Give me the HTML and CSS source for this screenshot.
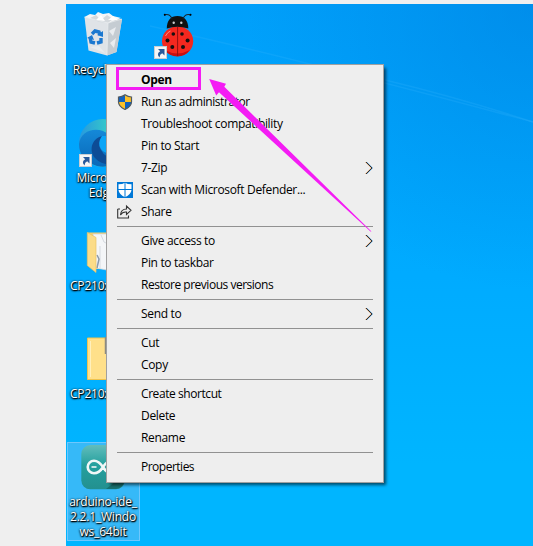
FILE: index.html
```
<!DOCTYPE html>
<html lang="en">
<head>
<meta charset="utf-8">
<title>Desktop</title>
<link rel="stylesheet" href="styles.css">
</head>
<body>
<main class="desktop">
  <svg class="wallpaper" viewBox="66 4 467 542" aria-hidden="true">
    <path d="M150 26Q290 57 533 122" />
    <path d="M385 80Q460 98 533 122" />
  </svg>

  <div class="shortcut recycle">
    <svg class="icon" viewBox="79 11 48 48">
      <path d="M84.5 17L122 19L116.5 52L107 55.5L88.5 50.5Z" fill="#dfe3e7"/>
      <path d="M108 20L122 19L116.5 52L107 55.5Z" fill="#c5ccd2"/>
      <path d="M84.5 17L90 14L95 15L98 12L103 14L109 13L113 16L121 18L108 23Z" fill="#f5f6f7"/>
      <path d="M90 18l6-3 5 5 6-5 6 4-5 4-9-1z" fill="#d4d9dd"/>
      <path d="M96 20l5-5 4 6zM108 20l5-4 5 4z" fill="#fff"/>
      <path d="M84.5 17L108 23L122 19M108 23L107 55" fill="none" stroke="#eef1f4" stroke-width=".6"/>
      <path d="M109 31l7-4-3 9zM110 43l6-5-2 10zM90 47l9-1 6 7z" fill="#e9ecef"/>
      <path d="M92 34l3-3 4 1 1 3M90 37l1 5 4 1M97 43l4-1 0-4" fill="none" stroke="#1b78d0" stroke-width="3.400"/>
      <path d="M97 35l6 2 0-6zM87 38l5-3 2 5z" fill="#1b78d0"/>
    </svg>
    <span class="label">Recycle Bin</span>
  </div>

  <div class="shortcut ladybug">
    <svg class="icon" viewBox="153 11 48 48">
      <ellipse cx="177.6" cy="41.2" rx="15.6" ry="15" fill="#f4281f"/>
      <path d="M165 50Q177 57 190 50Q185 56.500 177.500 56.500Q169 56 165 50Z" fill="#c80f12"/>
      <path d="M166.800 28.500Q167 16 177.500 16Q188 16 188.300 28.500Q177 25 166.800 28.500Z" fill="#111"/>
      <path d="M164 15q6-2 8 4M191 15q-6-2-8 4" fill="none" stroke="#182028" stroke-width="1.100"/>
      <circle cx="164.800" cy="14.800" r="1" /><circle cx="190.500" cy="14.800" r="1"/>
      <path d="M177.600 27V56" stroke="#941010"/>
      <g fill="#161010"><circle cx="173.300" cy="34" r="1.800"/><circle cx="182" cy="34" r="1.800"/><circle cx="167.500" cy="40.500" r="2"/><circle cx="187.600" cy="40.500" r="2"/><circle cx="172.300" cy="47" r="2"/><circle cx="183" cy="47" r="2"/></g>
      <circle cx="173.700" cy="22.800" r="1.200" fill="#ccc"/><circle cx="181.300" cy="22.800" r="1.200" fill="#ccc"/>
      <path d="M165.500 36q2-4 5-5" stroke="#ff8b80" fill="none"/>
      <rect x="154.500" y="46.500" width="12" height="12" fill="#f6f6f6" stroke="#c9ced4"/>
      <path d="M158 49h6.500v6.500l-2.300-2.200q-2.500 1-2.700 4.200q-3.500-4 .7-6.300z" fill="#28599b"/>
    </svg>
  </div>

  <div class="shortcut edge">
    <svg class="icon" viewBox="79 119 48 48">
      <defs>
        <linearGradient id="teal" x1="0" x2="1"><stop stop-color="#2798df"/><stop offset=".6" stop-color="#35c8ca"/><stop offset="1" stop-color="#66dd70"/></linearGradient>
        <linearGradient id="blue" x1="0" y1="0" x2="0" y2="1"><stop stop-color="#1589d8"/><stop offset="1" stop-color="#0868b8"/></linearGradient>
      </defs>
      <circle cx="103" cy="143" r="24" fill="url(#teal)"/>
      <path d="M79 144C80 132 93 127 103 131Q112 135 113 142L115 164Q106 168 97 166Q79 160 79 144Z" fill="url(#blue)"/>
      <path d="M102 136C91 139 89 151 95 158Q102 166 115 164L120 158Q106 160 101 150Q97 143 102 136Z" fill="#0d4c96"/>
      <path d="M102 136Q97 144 101 149Q103 153 112 154V136Z" fill="#0aa5f7"/>
      <rect x="79.500" y="154.500" width="12" height="12" fill="#f6f6f6" stroke="#c9ced4"/>
      <path d="M83 157h6.500v6.500l-2.300-2.200q-2.500 1-2.700 4.200q-3.500-4 .7-6.300z" fill="#28599b"/>
    </svg>
    <span class="label">Microsoft<br>Edge</span>
  </div>

  <div class="shortcut folder-open">
    <svg class="icon" viewBox="79 227 48 48">
      <path d="M87.500 232.500H119V269H96Z" fill="#f0cd72"/>
      <path d="M93 234H112V271L96 268Z" fill="#f4f6f8" stroke="#cdd3d9" stroke-width=".7"/>
      <path d="M101 235l3 7 6 3M100 268V246" fill="none" stroke="#d5dae0"/>
      <path d="M97 255l2 4-2 9" fill="none" stroke="#8a9aad" stroke-width="1.500"/>
      <path d="M87.300 232.500L96 237.500V272.500L87.300 265.500Z" fill="#fbdc88" stroke="#e9c364" stroke-width=".7"/>
    </svg>
    <span class="label">CP210x</span>
  </div>

  <div class="shortcut folder">
    <svg class="icon" viewBox="79 335 48 48">
      <path d="M87.500 338H119V379.500H87.500Z" fill="#ffe08a" stroke="#efc34e"/>
      <path d="M90.500 341V377" stroke="#fff0bd"/>
      <path d="M105.500 337V354" stroke="#8c8b80" stroke-width="1.500"/>
    </svg>
    <span class="label">CP210x</span>
  </div>

  <div class="shortcut arduino selected">
    <svg class="icon" viewBox="79 443 48 48">
      <defs><linearGradient id="ide" x1="0" y1="0" x2="0" y2="1"><stop stop-color="#62bdbc"/><stop offset=".45" stop-color="#25a09e"/><stop offset="1" stop-color="#23908f"/></linearGradient></defs>
      <rect x="81.300" y="445" width="43.500" height="44.300" rx="9" fill="url(#ide)"/>
      <path d="M106 489L124 475V483Q122 488 116 489Z" fill="#18716f"/>
      <path d="M103 467C99 461 96 460.700 94 460.700A6.300 6.300 0 0 0 94 473.300C97 473.300 100 472 103 467C106 462 109 460.700 112 460.700A6.300 6.300 0 0 1 112 473.300C109 473.300 106 472 103 467Z" fill="none" stroke="#f1f7f7" stroke-width="2.600"/>
      <path d="M91.500 467h5" stroke="#f1f7f7" stroke-width="1.600"/>
    </svg>
    <span class="label">arduino-ide_<br>2.2.1_Windo<br>ws_64bit</span>
  </div>

  <nav class="menu">
    <div class="item default">Open</div>
    <div class="item admin">
      <svg class="glyph" viewBox="0 0 16 16"><path d="M8 .8Q11 3 14.500 3V8Q14.500 12.500 8 15.500Q1.500 12.500 1.500 8V3Q5 3 8 .8Z" fill="#fdc128"/><path d="M8 1V8H1.500V3Q5 3 8 1ZM8 8H14.500Q14 12.500 8 15.500Z" fill="#1261bf"/><path d="M8 .8Q11 3 14.500 3V8Q14.500 12.500 8 15.500Q1.500 12.500 1.500 8V3Q5 3 8 .8Z" fill="none" stroke="#505a62" stroke-width="1.200"/></svg>
      <span>Run as administrator</span>
    </div>
    <div class="item trouble">Troubleshoot compatibility</div>
    <div class="item pin">Pin to Start</div>
    <div class="item zip">7-Zip<svg class="chevron" viewBox="0 0 8 14"><path class="warm" d="M.5 1L6.500 7L.5 13"/><path class="cool" d="M1.500 1L7.500 7L1.500 13"/><path d="M1 1L7 7L1 13"/></svg></div>
    <div class="item scan">
      <svg class="glyph" viewBox="0 0 16 16"><path d="M0 0H16V16H0Z" fill="#0078d7"/><path d="M8 .8Q10.500 2.300 14.500 2.300V8Q14 12.500 8 15.300Q2 12.500 1.500 8V2.300Q5.500 2.300 8 .8Z" fill="#fff"/><path d="M8 0V16M1 7.500H15" stroke="#0078d7"/></svg>
      <span>Scan with Microsoft Defender...</span>
    </div>
    <div class="item share">
      <svg class="glyph" viewBox="0 0 16 16"><path d="M.7 5V14H11.500V11.500M.7 5H3M3.500 11Q4 5 9.500 5V2L14 6.300L9.500 10.500V8Q5.500 7.500 3.500 11Z" fill="none" stroke="#333" stroke-width="1.100"/></svg>
      <span>Share</span>
    </div>
    <hr class="separator">
    <div class="item access">Give access to<svg class="chevron" viewBox="0 0 8 14"><path class="warm" d="M.5 1L6.500 7L.5 13"/><path class="cool" d="M1.500 1L7.500 7L1.500 13"/><path d="M1 1L7 7L1 13"/></svg></div>
    <div class="item taskbar">Pin to taskbar</div>
    <div class="item restore">Restore previous versions</div>
    <hr class="separator">
    <div class="item send">Send to<svg class="chevron" viewBox="0 0 8 14"><path class="warm" d="M.5 1L6.500 7L.5 13"/><path class="cool" d="M1.500 1L7.500 7L1.500 13"/><path d="M1 1L7 7L1 13"/></svg></div>
    <hr class="separator">
    <div class="item cut">Cut</div>
    <div class="item copy">Copy</div>
    <hr class="separator">
    <div class="item create">Create shortcut</div>
    <div class="item delete">Delete</div>
    <div class="item rename">Rename</div>
    <hr class="separator">
    <div class="item properties">Properties</div>
  </nav>

  <svg class="annotation" viewBox="66 4 467 542" aria-hidden="true">
    <rect x="117.500" y="68.500" width="82" height="20" fill="none" stroke="#f41cf4" stroke-width="3"/>
    <path d="M209.200 79L226 83.700L224.300 86.700L371.500 231.500L370.500 231.500L219 92.200L216.200 95.500Z" fill="#f41cf4"/>
  </svg>
</main>
</body>
</html>
```
FILE: styles.css
```
body {
  margin: 0;
  background: #efefef;
  font-family: "Open Sans", "Noto Sans", sans-serif;
  font-size: 12px;
  color: #000;
}

.desktop {
  position: relative;
  width: 467px;
  height: 542px;
  margin: 4px 0 0 66px;
  overflow: hidden;
  background:
    radial-gradient(circle at 100% 0, rgba(0, 125, 220, 0.5), transparent 40%),
    linear-gradient(#009ffa, #00abff 50%, #00b5ff 85%);
}

.wallpaper,
.annotation {
  position: absolute;
  inset: 0;
  width: 467px;
  height: 542px;
}

.wallpaper path {
  fill: none;
  stroke: rgba(60, 185, 255, 0.2);
  stroke-width: 1.5;
}

/* Desktop shortcuts sit on a free canvas */
.shortcut {
  position: absolute;
  left: 1px;
  box-sizing: border-box;
  width: 73px;
  height: 99px;
  padding-top: 1px;
}

.icon {
  display: block;
  width: 48px;
  height: 48px;
  margin-left: 12px;
}

.label {
  display: block;
  margin-top: 3px;
  line-height: 15px;
  text-align: center;
  white-space: nowrap;
  color: #fff;
  letter-spacing: -0.2px;
  text-shadow: 1px 1px 1px #000, 0 1px 2px #000, 0 0 2px rgba(0, 0, 0, 0.8);
}

.recycle { top: 6px; }
.ladybug { top: 6px; left: 75px; }
.edge { top: 114px; }
.folder-open { top: 222px; }
.folder { top: 330px; }
.arduino { top: 438px; }

.edge .label { margin-left: -3px; }
.recycle .label { margin-left: -1px; }
.arduino .label { margin-left: -1px; }

.folder .label,
.folder-open .label {
  padding-left: 3px;
  text-align: left;
}

.selected::before {
  content: "";
  position: absolute;
  inset: 0;
  border: 1px solid rgba(135, 205, 255, 0.7);
  background: rgba(120, 190, 240, 0.45);
}

.selected .icon,
.selected .label {
  position: relative;
}

.menu {
  position: absolute;
  left: 40px;
  top: 60px;
  box-sizing: border-box;
  width: 278px;
  height: 419px;
  padding: 4px 10px;
  border: 1px solid #a0a0a0;
  background: #eee;
  box-shadow: 3px 3px 3px -1px rgba(0, 0, 0, 0.6);
}

.item {
  display: flex;
  align-items: center;
  height: 22px;
  padding-left: 24px;
  line-height: 16px;
  white-space: nowrap;
  letter-spacing: -0.33px;
}

.default { font-weight: 700; }
.admin { letter-spacing: -0.42px; }
.restore { letter-spacing: -0.48px; }
.create { letter-spacing: -0.43px; }
.properties { letter-spacing: -0.5px; }

.glyph {
  flex: none;
  width: 16px;
  height: 16px;
  margin: 0 8px 0 -24px;
}

.chevron {
  width: 8px;
  height: 14px;
  margin-left: auto;
}

.chevron path {
  fill: none;
  stroke: #333;
}

.chevron .warm { stroke: #e39a5d; }
.chevron .cool { stroke: #4b9de0; }

.separator {
  height: 1px;
  margin: 3px 0;
  border: 0;
  background: #919191;
}
```
